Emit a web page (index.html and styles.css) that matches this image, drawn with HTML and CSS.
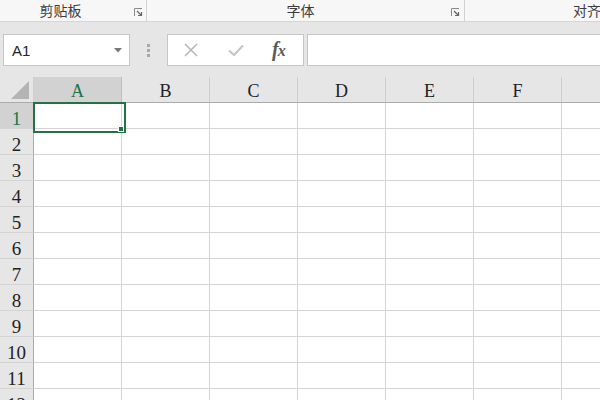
FILE: index.html
```html
<!DOCTYPE html>
<html>
<head>
<meta charset="utf-8">
<link rel="stylesheet" href="styles.css">
</head>
<body>
<div class="ribbon">
  <div class="group g1"><span class="glabel">剪贴板</span><span class="launcher"><svg width="9" height="9" viewBox="0 0 9 9"><path d="M0.5 8V0.5H8" fill="none" stroke="#8a8a8a" stroke-width="1"/><path d="M3 3L7 7M4 7.5H7.5V4" fill="none" stroke="#666" stroke-width="1.2"/></svg></span></div>
  <div class="group g2"><span class="glabel">字体</span><span class="launcher"><svg width="9" height="9" viewBox="0 0 9 9"><path d="M0.5 8V0.5H8" fill="none" stroke="#8a8a8a" stroke-width="1"/><path d="M3 3L7 7M4 7.5H7.5V4" fill="none" stroke="#666" stroke-width="1.2"/></svg></span></div>
  <div class="group g3"><span class="glabel">对齐方式</span></div>
</div>
<div class="toolbar">
  <div class="namebox"><span class="ref">A1</span><svg class="caret" width="8" height="5" viewBox="0 0 8 5"><path d="M0 0H8L4 4.5Z" fill="#777"/></svg></div>
  <div class="grip"><i></i><i></i><i></i></div>
  <div class="fbuttons">
    <svg class="ficon" width="16" height="16" viewBox="0 0 16 16"><path d="M2 2L14 14M14 2L2 14" stroke="#b8b8b8" stroke-width="1.6" fill="none"/></svg>
    <svg class="ficon" width="18" height="16" viewBox="0 0 18 16"><path d="M2 8.5L7 13L16 3.5" stroke="#c4c4c4" stroke-width="2" fill="none"/></svg>
    <span class="fx"><i>f</i><i class="x">x</i></span>
  </div>
  <div class="formula"></div>
</div>
<div class="sheet">
  <div class="hrow">
    <div class="corner"><svg width="18" height="18" viewBox="0 0 18 18"><path d="M18 0V18H0Z" fill="#b4b4b4"/></svg></div>
    <div class="ch sel">A</div><div class="ch">B</div><div class="ch">C</div><div class="ch">D</div><div class="ch">E</div><div class="ch">F</div><div class="ch last"></div>
  </div>
  <div class="row"><div class="rh sel">1</div><div class="c active"><span class="handle"></span></div><div class="c"></div><div class="c"></div><div class="c"></div><div class="c"></div><div class="c"></div><div class="c"></div></div>
  <div class="row"><div class="rh">2</div><div class="c"></div><div class="c"></div><div class="c"></div><div class="c"></div><div class="c"></div><div class="c"></div><div class="c"></div></div>
  <div class="row"><div class="rh">3</div><div class="c"></div><div class="c"></div><div class="c"></div><div class="c"></div><div class="c"></div><div class="c"></div><div class="c"></div></div>
  <div class="row"><div class="rh">4</div><div class="c"></div><div class="c"></div><div class="c"></div><div class="c"></div><div class="c"></div><div class="c"></div><div class="c"></div></div>
  <div class="row"><div class="rh">5</div><div class="c"></div><div class="c"></div><div class="c"></div><div class="c"></div><div class="c"></div><div class="c"></div><div class="c"></div></div>
  <div class="row"><div class="rh">6</div><div class="c"></div><div class="c"></div><div class="c"></div><div class="c"></div><div class="c"></div><div class="c"></div><div class="c"></div></div>
  <div class="row"><div class="rh">7</div><div class="c"></div><div class="c"></div><div class="c"></div><div class="c"></div><div class="c"></div><div class="c"></div><div class="c"></div></div>
  <div class="row"><div class="rh">8</div><div class="c"></div><div class="c"></div><div class="c"></div><div class="c"></div><div class="c"></div><div class="c"></div><div class="c"></div></div>
  <div class="row"><div class="rh">9</div><div class="c"></div><div class="c"></div><div class="c"></div><div class="c"></div><div class="c"></div><div class="c"></div><div class="c"></div></div>
  <div class="row"><div class="rh">10</div><div class="c"></div><div class="c"></div><div class="c"></div><div class="c"></div><div class="c"></div><div class="c"></div><div class="c"></div></div>
  <div class="row"><div class="rh">11</div><div class="c"></div><div class="c"></div><div class="c"></div><div class="c"></div><div class="c"></div><div class="c"></div><div class="c"></div></div>
  <div class="row"><div class="rh">12</div><div class="c"></div><div class="c"></div><div class="c"></div><div class="c"></div><div class="c"></div><div class="c"></div><div class="c"></div></div>
</div>
</body>
</html>
```
FILE: styles.css
```css
* { box-sizing: border-box; }
html, body { margin: 0; padding: 0; }
body {
  width: 600px;
  height: 400px;
  overflow: hidden;
  background: #ffffff;
  font-family: "Liberation Sans", Arial, sans-serif;
}
.ribbon {
  display: flex;
  height: 22px;
  background: #f7f7f7;
  border-bottom: 1px solid #d6d6d6;
  overflow: hidden;
  white-space: nowrap;
}
.group {
  position: relative;
  display: flex;
  align-items: flex-start;
  justify-content: center;
  height: 21px;
  border-right: 1px solid #d2d2d2;
  flex-shrink: 0;
}
.g1 { width: 147px; padding-right: 25px; }
.g2 { width: 318px; padding-right: 10px; }
.g3 { width: 240px; border-right: none; justify-content: flex-start; padding-left: 108px; }
.glabel {
  font-family: "Noto Sans CJK SC", "Noto Sans", sans-serif;
  font-size: 14px;
  line-height: 20px;
  color: #3c3c3c;
}
.launcher {
  position: absolute;
  right: 3px;
  top: 8px;
  width: 9px;
  height: 9px;
  display: flex;
}
.g1 .launcher { right: 3px; }
.g2 .launcher { right: 4px; }
.toolbar {
  display: flex;
  align-items: flex-start;
  height: 55px;
  background: #e6e6e6;
  padding-top: 12px;
  padding-left: 3px;
}
.namebox {
  width: 127px;
  height: 32px;
  background: #fff;
  border: 1px solid #c6c6c6;
  display: flex;
  align-items: center;
  justify-content: space-between;
  padding: 0 7px 0 8px;
  flex-shrink: 0;
}
.ref {
  font-size: 15px;
  color: #262626;
}
.caret { margin-top: 1px; }
.grip {
  width: 37px;
  height: 32px;
  display: flex;
  flex-direction: column;
  align-items: center;
  justify-content: center;
  gap: 2px;
  flex-shrink: 0;
}
.grip i {
  display: block;
  width: 3px;
  height: 3px;
  background: #a8a8a8;
}
.fbuttons {
  width: 137px;
  height: 32px;
  background: #fff;
  border: 1px solid #c6c6c6;
  display: flex;
  align-items: center;
  padding-left: 15px;
  flex-shrink: 0;
}
.fbuttons .ficon:first-child { margin-right: 28px; }
.fbuttons .ficon:nth-child(2) { margin-right: 27px; }
.fx {
  font-family: "Liberation Serif", "Times New Roman", serif;
  font-size: 20px;
  font-weight: bold;
  color: #5a5a5a;
  letter-spacing: -1px;
  line-height: 20px;
}
.fx i { font-style: italic; }
.fx .x { font-size: 16px; }
.formula {
  flex: 1;
  margin-left: 3px;
  height: 32px;
  background: #fff;
  border: 1px solid #c6c6c6;
  border-right: none;
}
.sheet {
  display: flex;
  flex-direction: column;
  background: #fff;
}
.hrow {
  display: flex;
  height: 26px;
  background: #e6e6e6;
  border-bottom: 1px solid #ababab;
}
.corner {
  width: 34px;
  height: 25px;
  flex-shrink: 0;
  border-right: 1px solid #cfcfcf;
  display: flex;
  align-items: flex-end;
  justify-content: flex-end;
  padding: 0 4px 3px 0;
}
.ch {
  width: 88px;
  flex-shrink: 0;
  border-right: 1px solid #cfcfcf;
  font-family: "Liberation Serif", "Times New Roman", serif;
  font-size: 18px;
  line-height: 28px;
  text-align: center;
  color: #222;
}
.ch.sel {
  background: #d2d2d2;
  color: #217346;
  border-right-color: #bdbdbd;
}
.ch.last { width: 60px; border-right: none; }
.row {
  display: flex;
  height: 26px;
  border-bottom: 1px solid #d4d4d4;
}
.rh {
  width: 34px;
  flex-shrink: 0;
  background: #e6e6e6;
  border-right: 1px solid #ababab;
  font-family: "Liberation Serif", "Times New Roman", serif;
  font-size: 19px;
  line-height: 27px;
  padding-top: 2px;
  text-align: center;
  color: #222;
  margin-bottom: -1px;
  border-bottom: 1px solid #d4d4d4;
}
.rh.sel { background: #d2d2d2; color: #217346; }
.c {
  width: 88px;
  flex-shrink: 0;
  border-right: 1px solid #d4d4d4;
}
.c.active {
  position: relative;
}
.c.active::after {
  content: "";
  position: absolute;
  left: -1px;
  top: -1px;
  width: 89px;
  height: 27px;
  border: 2px solid #217346;
}
.handle {
  position: absolute;
  right: -3px;
  bottom: -4px;
  width: 6px;
  height: 6px;
  background: #217346;
  border: 1px solid #fff;
  z-index: 2;
}
```
